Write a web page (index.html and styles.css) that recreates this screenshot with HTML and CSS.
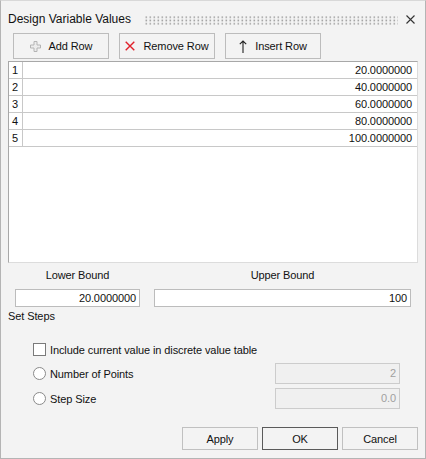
FILE: index.html
```html
<!DOCTYPE html>
<html>
<head>
<meta charset="utf-8">
<link rel="stylesheet" href="styles.css">
</head>
<body>
<div class="dialog">
  <div class="titlebar">
    <span class="title">Design Variable Values</span>
    <svg class="grip" height="9" preserveAspectRatio="none">
      <defs>
        <pattern id="dots" width="4" height="3.3" patternUnits="userSpaceOnUse">
          <rect x="0.5" y="0.4" width="1.6" height="1.6" fill="#a3a3a3"/>
        </pattern>
      </defs>
      <rect x="0" y="0" width="100%" height="9" fill="url(#dots)"/>
    </svg>
    <svg class="close" width="9" height="9" viewBox="0 0 9 9"><path d="M0.5 0.5 L8.5 8.5 M8.5 0.5 L0.5 8.5" stroke="#333" stroke-width="1.1" fill="none"/></svg>
  </div>

  <div class="toolbar">
    <button class="tbtn">
      <svg width="11" height="11" viewBox="0 0 11 11"><path d="M4 0.5 H7 V4 H10.5 V7 H7 V10.5 H4 V7 H0.5 V4 H4 Z" fill="#ececec" stroke="#b4b4b4" stroke-width="1"/></svg>
      <span>Add Row</span>
    </button>
    <button class="tbtn">
      <svg width="10" height="10" viewBox="0 0 10 10"><path d="M0.7 0.7 L9.3 9.3 M9.3 0.7 L0.7 9.3" stroke="#e0202a" stroke-width="1.4" fill="none"/></svg>
      <span>Remove Row</span>
    </button>
    <button class="tbtn">
      <svg width="8" height="13" viewBox="0 0 8 13"><path d="M4 1 V13 M0.8 4.2 L4 1 L7.2 4.2" stroke="#222" stroke-width="1.1" fill="none"/></svg>
      <span>Insert Row</span>
    </button>
  </div>

  <div class="grid">
    <div class="row"><div class="num">1</div><div class="val">20.0000000</div></div>
    <div class="row"><div class="num">2</div><div class="val">40.0000000</div></div>
    <div class="row"><div class="num">3</div><div class="val">60.0000000</div></div>
    <div class="row"><div class="num">4</div><div class="val">80.0000000</div></div>
    <div class="row"><div class="num">5</div><div class="val">100.0000000</div></div>
  </div>

  <div class="bounds">
    <div class="blabel">Lower Bound</div>
    <div class="blabel">Upper Bound</div>
    <div class="field">20.0000000</div>
    <div class="field">100</div>
  </div>

  <div class="steps-label">Set Steps</div>

  <div class="options">
    <div class="opt check-row">
      <span class="checkbox"></span>
      <span class="olabel">Include current value in discrete value table</span>
    </div>
    <div class="opt points-row">
      <span class="radio"></span>
      <span class="olabel">Number of Points</span>
      <div class="field disabled">2</div>
    </div>
    <div class="opt step-row">
      <span class="radio"></span>
      <span class="olabel">Step Size</span>
      <div class="field disabled">0.0</div>
    </div>
  </div>

  <div class="footer">
    <button class="fbtn">Apply</button>
    <button class="fbtn default">OK</button>
    <button class="fbtn">Cancel</button>
  </div>
</div>
</body>
</html>
```

FILE: styles.css
```css
* { box-sizing: border-box; }
html, body { margin: 0; padding: 0; background: #f3f3f3; }
body {
  font-family: "Liberation Sans", Arial, sans-serif;
  font-size: 11px;
  letter-spacing: -0.1px;
  color: #111;
}
.dialog {
  width: 426px;
  height: 459px;
  border: 1px solid #b4b4b4;
  border-top-color: #d8d8d8;
  background: #f3f3f3;
  padding: 0 7px;
}
.titlebar {
  display: flex;
  align-items: center;
  padding-top: 11px;
  height: 26px;
  margin-bottom: 6px;
}
.title {
  font-size: 12px;
  line-height: 15px;
  letter-spacing: 0;
  color: #111;
}
.grip {
  flex: 1;
  display: block;
  height: 9px;
  margin: 1px 8px 0 14px;
}
.close { display: block; margin-right: 3px; }

.toolbar {
  display: flex;
  gap: 10px;
  margin-left: 5px;
  margin-bottom: 2px;
  height: 26px;
}
.tbtn {
  width: 96px;
  height: 26px;
  border: 1px solid #bcbcbc;
  background: #f3f3f3;
  display: flex;
  align-items: center;
  justify-content: center;
  gap: 8px;
  font: inherit;
  letter-spacing: inherit;
  color: #111;
  padding: 0;
}
.tbtn svg { display: block; }

.grid {
  height: 202px;
  background: #fff;
  border: 1px solid #dcdcdc;
  border-left-color: #a8a8a8;
  border-top-color: #a8a8a8;
}
.row {
  display: grid;
  grid-template-columns: 14px 1fr;
  height: 17px;
  border-bottom: 1px solid #c8c8c8;
  line-height: 16px;
}
.num {
  border-right: 1px solid #c8c8c8;
  padding-left: 3px;
}
.val {
  text-align: right;
  padding-right: 5px;
}

.bounds {
  display: grid;
  grid-template-columns: 125px 257px;
  column-gap: 14px;
  row-gap: 6px;
  padding-left: 7px;
  margin-top: 5px;
}
.blabel {
  text-align: center;
  line-height: 15px;
}
.field {
  height: 18px;
  background: #fff;
  border: 1px solid #bcbcbc;
  text-align: right;
  padding-right: 3px;
  line-height: 16px;
}
.steps-label {
  margin-top: 2px;
  line-height: 15px;
}

.options {
  padding-left: 25px;
  padding-right: 18px;
  margin-top: 18px;
}
.opt {
  display: flex;
  align-items: center;
  gap: 4px;
}
.check-row { height: 15px; }
.points-row { height: 21px; margin-top: 6px; }
.step-row { height: 21px; margin-top: 4px; }
.checkbox {
  width: 13px;
  height: 13px;
  border: 1px solid #7a7a7a;
  background: #fff;
}
.radio {
  width: 13px;
  height: 13px;
  border: 1px solid #8a8a8a;
  border-radius: 50%;
  background: #fff;
}
.opt .field {
  margin-left: auto;
  width: 125px;
  height: 21px;
  line-height: 19px;
}
.field.disabled {
  background: #f0f0f0;
  border-color: #cccccc;
  color: #a0a0a0;
}

.footer {
  display: flex;
  justify-content: flex-end;
  gap: 4px;
  margin-top: 18px;
}
.fbtn {
  width: 76px;
  height: 23px;
  border: 1px solid #c0c0c0;
  background: #f3f3f3;
  font: inherit;
  letter-spacing: inherit;
  color: #111;
  padding: 0;
}
.fbtn.default { border-color: #5a5a5a; }
```
